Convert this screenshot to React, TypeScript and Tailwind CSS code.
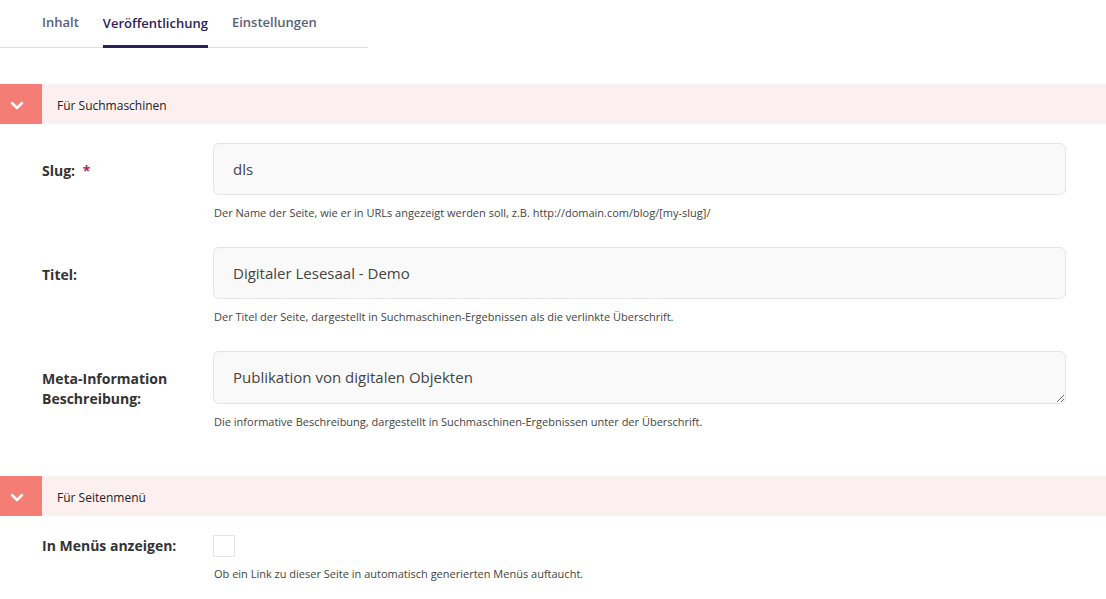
import React from 'react';

const font = { fontFamily: '"Open Sans", "Noto Sans", sans-serif' };

const Chevron = () => (
  <svg width="14" height="9" viewBox="0 0 14 9" fill="none">
    <path d="M2 2l5 5 5-5" stroke="white" strokeWidth="2.5" strokeLinecap="round" strokeLinejoin="round" />
  </svg>
);

const SectionHeader: React.FC<{ title: string }> = ({ title }) => (
  <div className="flex h-10 items-center bg-[#fbefef]">
    <div className="flex h-10 w-[42px] items-center pl-[10px] pt-[3px] bg-[#f47e75]">
      <Chevron />
    </div>
    <span className="ml-[15px] mt-[4px] text-[12px] text-[#222]">{title}</span>
  </div>
);

interface RowProps {
  label: React.ReactNode;
  help: string;
  children: React.ReactNode;
}

const Row: React.FC<RowProps> = ({ label, help, children }) => (
  <div className="flex">
    <div className="w-[213px] shrink-0 pl-[42px] pt-[18px] text-[14px] font-bold leading-[20px] text-[#333]">{label}</div>
    <div className="w-[853px]">
      {children}
      <p className="mt-[10px] pl-px text-[11px] leading-[16px] text-[#444]">{help}</p>
    </div>
  </div>
);

const inputCls =
  'h-[52px] w-full rounded-md border border-[#e5e5e5] bg-[#f9f9f9] px-[19px] text-[15px] text-[#444] outline-none';

export default function App() {
  return (
    <div className="min-h-screen w-[1106px] bg-white" style={font}>
      <div className="flex w-[368px] gap-6 border-b border-[#e0e0e0] pl-[42px] text-[13px] font-semibold">
        <button className="pb-[14px] pt-[13px] text-[#5a5f73]">Inhalt</button>
        <button className="-mb-px border-b-[3px] border-[#2c1d5c] pb-[11px] pt-[13px] text-[#2c1d5c]">Veröffentlichung</button>
        <button className="pb-[14px] pt-[13px] text-[#5a5f73]">Einstellungen</button>
      </div>

      <div className="mt-[36px]">
        <SectionHeader title="Für Suchmaschinen" />
      </div>

      <div className="mt-[19px] flex flex-col gap-[26px]">
        <Row
          label={
            <span>
              Slug: <span className="ml-1 text-[#c2185b]">*</span>
            </span>
          }
          help="Der Name der Seite, wie er in URLs angezeigt werden soll, z.B. http://domain.com/blog/[my-slug]/"
        >
          <input className={inputCls} defaultValue="dls" />
        </Row>
        <Row label="Titel:" help="Der Titel der Seite, dargestellt in Suchmaschinen-Ergebnissen als die verlinkte Überschrift.">
          <input className={inputCls} defaultValue="Digitaler Lesesaal - Demo" />
        </Row>
        <Row
          label={
            <span>
              Meta-Information
              <br />
              Beschreibung:
            </span>
          }
          help="Die informative Beschreibung, dargestellt in Suchmaschinen-Ergebnissen unter der Überschrift."
        >
          <textarea
            className="block h-[53px] w-full resize-y rounded-md border border-[#e5e5e5] bg-[#f9f9f9] px-[19px] pt-[15px] text-[15px] leading-[20px] text-[#444] outline-none"
            defaultValue="Publikation von digitalen Objekten"
          />
        </Row>
      </div>

      <div className="mt-[46px]">
        <SectionHeader title="Für Seitenmenü" />
      </div>

      <div className="mt-[19px] flex">
        <div className="w-[213px] shrink-0 pl-[42px] pt-[1px] text-[14px] font-bold leading-[20px] text-[#333]">In Menüs anzeigen:</div>
        <div>
          <div className="h-[22px] w-[22px] border border-[#e5e5e5] bg-white" />
          <p className="mt-[9px] pl-px text-[11px] leading-[16px] text-[#444]">
            Ob ein Link zu dieser Seite in automatisch generierten Menüs auftaucht.
          </p>
        </div>
      </div>
    </div>
  );
}
